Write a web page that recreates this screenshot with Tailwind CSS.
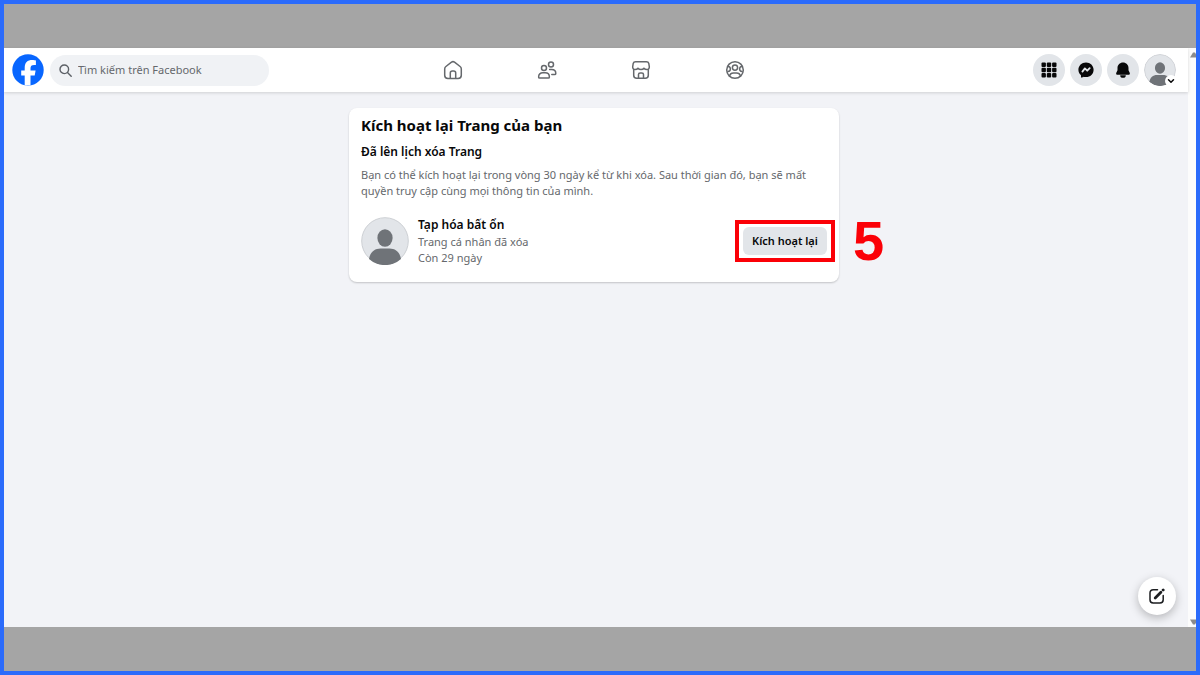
<!DOCTYPE html>
<html lang="vi">
<head>
    <meta charset="UTF-8">
    <meta name="viewport" content="width=device-width, initial-scale=1.0">
    <title>Facebook</title>
    <script src="https://cdn.jsdelivr.net/npm/@tailwindcss/browser@4"></script>
</head>
<body class="flex h-screen flex-col overflow-hidden border-4 border-[#2b6bfb] bg-[#a5a5a5] py-11 font-['Noto_Sans','Open_Sans',sans-serif] text-[#080809]">
    <div class="flex min-h-0 flex-1 bg-[#f2f3f7]">
        <div class="relative flex min-w-0 flex-1 flex-col">
            <!-- Top bar -->
            <header class="grid h-11 grid-cols-[1fr_auto_1fr] items-center bg-white pr-3 pl-2 shadow-[0_1px_3px_rgba(0,0,0,0.15)]">
                <div class="flex items-center gap-1.5">
                    <a href="#" aria-label="Facebook" class="shrink-0">
                        <svg class="size-8" viewBox="0 0 32 32">
                            <circle cx="16" cy="16" r="15.7" fill="#0866ff"/>
                            <path d="M12.7 31.3V21.5H9.2v-5h3.5v-2.4c0-5.4 2.5-8 7.8-8 1 0 2.7.2 3.4.4v4.5c-.4 0-1-.1-1.8-.1-2.6 0-3.6 1-3.6 3.500v2.100h5.100l-.9 5h-4.200v9.800a16 16 0 0 1-5.800 0z" fill="#fff"/>
                        </svg>
                    </a>
                    <label class="flex h-[31px] w-[219px] items-center gap-1.5 rounded-full bg-[#f0f2f5] pl-[9px]">
                        <svg class="size-[13px] shrink-0" viewBox="0 0 13 13" fill="none" stroke="#5c6066" stroke-width="1.4" stroke-linecap="round">
                            <circle cx="5.3" cy="5.3" r="4.3"/>
                            <path d="M8.5 8.5l3.7 3.7"/>
                        </svg>
                        <input type="search" placeholder="Tìm kiếm trên Facebook" aria-label="Tìm kiếm trên Facebook" class="w-full min-w-0 bg-transparent text-[11px] outline-none placeholder:text-[#65686c]">
                    </label>
                </div>

                <nav class="flex text-[#65686c]">
                    <a href="#" aria-label="Trang chủ" class="flex h-11 w-[94px] items-center justify-center">
                        <svg class="size-5" viewBox="0 0 20 20" fill="none" stroke="currentColor" stroke-width="1.5" stroke-linejoin="round">
                            <path d="M1.7 9c0-1 .4-1.9 1.2-2.5l5.6-4.3c.9-.7 2.1-.7 3 0l5.600 4.300c.8.6 1.200 1.500 1.200 2.500v6.200c0 2-1.200 3.200-3.200 3.200H4.900c-2 0-3.200-1.200-3.200-3.200z"/>
                            <path d="M7.3 18.2v-5.1c0-1.3.7-2 2-2h1.4c1.3 0 2 .7 2 2v5.1"/>
                        </svg>
                    </a>
                    <a href="#" aria-label="Bạn bè" class="flex h-11 w-[94px] items-center justify-center">
                        <svg class="size-5" viewBox="0 0 20 20" fill="none" stroke="currentColor" stroke-width="1.5" stroke-linecap="round" stroke-linejoin="round">
                            <circle cx="7" cy="8" r="2.5"/>
                            <circle cx="14" cy="4.5" r="2.5"/>
                            <path d="M1.6 17c0-2.8 1.8-4.2 4.2-4.2h2.4c2.4 0 4.2 1.4 4.2 4.2 0 .7-.4 1.1-1.1 1.1H2.7c-.7 0-1.1-.4-1.1-1.1z"/>
                            <path d="M12.6 9.6h2.1c2.4 0 4.1 1.5 4.1 3.8 0 .8-.4 1.2-1.2 1.2h-2.8"/>
                        </svg>
                    </a>
                    <a href="#" aria-label="Marketplace" class="flex h-11 w-[94px] items-center justify-center">
                        <svg class="size-5" viewBox="0 0 20 20" fill="none" stroke="currentColor" stroke-width="1.5" stroke-linejoin="round">
                            <path d="M4.6 1.7h10.8c1.3 0 2.1.6 2.4 1.8l.5 3.2c.2 1.6-.8 2.8-2.4 2.8-1.2 0-2.3-.5-2.9-1.3-.6.8-1.7 1.3-3 1.3s-2.4-.5-3-1.3c-.6.8-1.7 1.3-2.9 1.3-1.6 0-2.6-1.2-2.4-2.8l.5-3.2c.3-1.2 1.1-1.8 2.4-1.8z"/>
                            <path d="M2.7 9v6.300c0 1.900 1.100 3 3 3h8.600c1.900 0 3-1.100 3-3V9"/>
                            <path d="M7.5 18.2v-3.6c0-1.1.6-1.7 1.7-1.7h1.6c1.1 0 1.7.6 1.7 1.7v3.6"/>
                        </svg>
                    </a>
                    <a href="#" aria-label="Nhóm" class="flex h-11 w-[94px] items-center justify-center">
                        <svg class="size-5" viewBox="0 0 20 20" fill="none" stroke="currentColor" stroke-width="1.5" stroke-linecap="round">
                            <circle cx="10" cy="10" r="8.3"/>
                            <circle cx="10" cy="7.6" r="2.6"/>
                            <path d="M4.6 16.2c.2-2.1 1.8-3.3 3.9-3.3h3c2.1 0 3.7 1.2 3.9 3.3"/>
                            <path d="M3.2 6.6c1.4.2 2.2 1.1 2.2 2.4s-.9 2.4-2.4 2.5M16.8 6.6c-1.4.2-2.2 1.1-2.2 2.4s.9 2.4 2.4 2.5"/>
                        </svg>
                    </a>
                </nav>

                <div class="flex justify-end gap-[5px]">
                    <button aria-label="Menu" class="flex size-8 items-center justify-center rounded-full bg-[#e2e5e9]">
                        <svg class="size-4" viewBox="0 0 16 16" fill="currentColor">
                            <rect x=".5" y=".5" width="4.4" height="4.4" rx="1"/>
                            <rect x="5.8" y=".5" width="4.4" height="4.4" rx="1"/>
                            <rect x="11.1" y=".5" width="4.4" height="4.4" rx="1"/>
                            <rect x=".5" y="5.8" width="4.4" height="4.4" rx="1"/>
                            <rect x="5.8" y="5.8" width="4.4" height="4.4" rx="1"/>
                            <rect x="11.1" y="5.8" width="4.4" height="4.4" rx="1"/>
                            <rect x=".5" y="11.1" width="4.4" height="4.4" rx="1"/>
                            <rect x="5.8" y="11.1" width="4.4" height="4.4" rx="1"/>
                            <rect x="11.1" y="11.1" width="4.4" height="4.4" rx="1"/>
                        </svg>
                    </button>
                    <button aria-label="Messenger" class="flex size-8 items-center justify-center rounded-full bg-[#e2e5e9]">
                        <svg class="size-4" viewBox="0 0 16 16">
                            <path d="M8 .4C3.7.4.4 3.5.4 7.7c0 2.2.9 4.1 2.4 5.4.2.2.2.4.2.6v1.4c.1.4.5.7.9.5l1.6-.7c.2-.1.3-.1.5 0 .6.1 1.3.2 2 .2 4.3 0 7.6-3.2 7.6-7.4S12.3.4 8 .4z" fill="currentColor"/>
                            <path d="M4.4 9.6l2.5-3.2 2.300 2.300 2.500-2.600" fill="none" stroke="#e2e5e9" stroke-width="1.8" stroke-linecap="round" stroke-linejoin="round"/>
                        </svg>
                    </button>
                    <button aria-label="Thông báo" class="flex size-8 items-center justify-center rounded-full bg-[#e2e5e9]">
                        <svg class="size-4" viewBox="0 0 16 16" fill="currentColor">
                            <path d="M8 .5c-3.2 0-5.5 2.4-5.5 5.5v2.3L1.3 10.7c-.5 1.1.1 2.1 1.3 2.1h10.8c1.2 0 1.8-1 1.3-2.1l-1.2-2.4V6c0-3.100-2.300-5.500-5.500-5.500z"/>
                            <path d="M5.2 13.2a2.8 2.6 0 0 0 5.6 0z"/>
                        </svg>
                    </button>
                    <button aria-label="Trang cá nhân của bạn" class="relative size-8 rounded-full">
                        <svg class="size-full rounded-full" viewBox="0 0 48 48">
                            <circle cx="24" cy="24" r="23.3" fill="#e2e5e9" stroke="#cdd0d4" stroke-width="1.3"/>
                            <ellipse cx="24" cy="21" rx="7.6" ry="8.7" fill="#6f7378"/>
                            <path d="M8 42c1-6.5 5.5-10.4 11.5-10.4h9c6 0 10.5 3.9 11.5 10.4a24 24 0 0 1-32 0z" fill="#6f7378"/>
                        </svg>
                        <span class="absolute -right-px -bottom-px flex size-3 items-center justify-center rounded-full bg-white">
                            <svg class="size-2" viewBox="0 0 8 8" fill="none" stroke="currentColor" stroke-width="1.5" stroke-linecap="round" stroke-linejoin="round">
                                <path d="M1.5 2.8L4 5.2l2.5-2.4"/>
                            </svg>
                        </span>
                    </button>
                </div>
            </header>

            <!-- Page card -->
            <main class="flex flex-1 justify-center pt-4 pr-3 pl-2">
                <section class="w-full max-w-[490px] self-start rounded-lg bg-white px-3 pt-[7px] pb-4 shadow-[0_1px_2px_rgba(0,0,0,0.2)]">
                    <h1 class="text-[15px] leading-5 font-bold">Kích hoạt lại Trang của bạn</h1>
                    <h2 class="mt-2 text-xs leading-[18px] font-semibold">Đã lên lịch xóa Trang</h2>
                    <p class="mt-1.5 text-[11px] leading-4 text-[#65686c]">Bạn có thể kích hoạt lại trong vòng 30 ngày kể từ khi xóa. Sau thời gian đó, bạn sẽ mất quyền truy cập cùng mọi thông tin của mình.</p>

                    <div class="mt-[17px] flex items-center gap-[9px]">
                        <svg class="size-12 shrink-0" viewBox="0 0 48 48" role="img" aria-label="Tạp hóa bất ổn">
                            <circle cx="24" cy="24" r="23.3" fill="#e2e5e9" stroke="#cdd0d4"/>
                            <ellipse cx="24" cy="21" rx="7.6" ry="8.7" fill="#6f7378"/>
                            <path d="M8 42c1-6.5 5.5-10.4 11.5-10.4h9c6 0 10.5 3.9 11.5 10.4a24 24 0 0 1-32 0z" fill="#6f7378"/>
                        </svg>
                        <div class="flex-1">
                            <h3 class="text-xs leading-[18px] font-semibold">Tạp hóa bất ổn</h3>
                            <p class="text-[11px] leading-4 text-[#65686c]">Trang cá nhân đã xóa</p>
                            <p class="text-[11px] leading-4 text-[#65686c]">Còn 29 ngày</p>
                        </div>
                        <div class="relative">
                            <button class="h-7 w-[84px] rounded-md bg-[#e2e5e9] text-[11px] font-semibold">Kích hoạt lại</button>
                            <!-- Step marker -->
                            <span class="pointer-events-none absolute -inset-x-2 -inset-y-[7px] border-4 border-[#fb0007]"></span>
                            <span class="pointer-events-none absolute top-1/2 left-full ml-[26px] -translate-y-1/2 [font-family:'Liberation_Sans',Arial,sans-serif] text-[56px] leading-none font-bold text-[#fb0007]">5</span>
                        </div>
                    </div>
                </section>
            </main>

            <button aria-label="Tin nhắn mới" class="absolute right-3 bottom-3 flex size-[38px] items-center justify-center rounded-full bg-white shadow-[0_3px_10px_rgba(0,0,0,0.25)]">
                <svg class="size-4" viewBox="0 0 16 16" fill="none" stroke="#1c1e21" stroke-linecap="round" stroke-linejoin="round">
                    <path d="M8.5 1.8H4.2C2.2 1.8 1 3 1 5v6.8c0 2 1.2 3.2 3.2 3.2H11c2 0 3.2-1.2 3.2-3.2V7.6" stroke-width="1.5"/>
                    <path d="M6.2 9.9l5.7-5.7" stroke-width="2.8"/>
                    <path d="M14.1 2l.1-.1" stroke-width="2.8"/>
                </svg>
            </button>
        </div>

        <!-- Scrollbar -->
        <div class="flex w-2 flex-col justify-between overflow-hidden bg-[#fcfcfc] pt-1 pb-0.5 pl-0.5" aria-hidden="true">
            <svg class="h-1.5 w-2 shrink-0" viewBox="0 0 8 6"><path d="M0 5.5L3 .5h2l3 5z" fill="#8b8b8b"/></svg>
            <svg class="h-1.5 w-2 shrink-0" viewBox="0 0 8 6"><path d="M0 .5L3 5.5h2l3-5z" fill="#8b8b8b"/></svg>
        </div>
    </div>
</body>
</html>
